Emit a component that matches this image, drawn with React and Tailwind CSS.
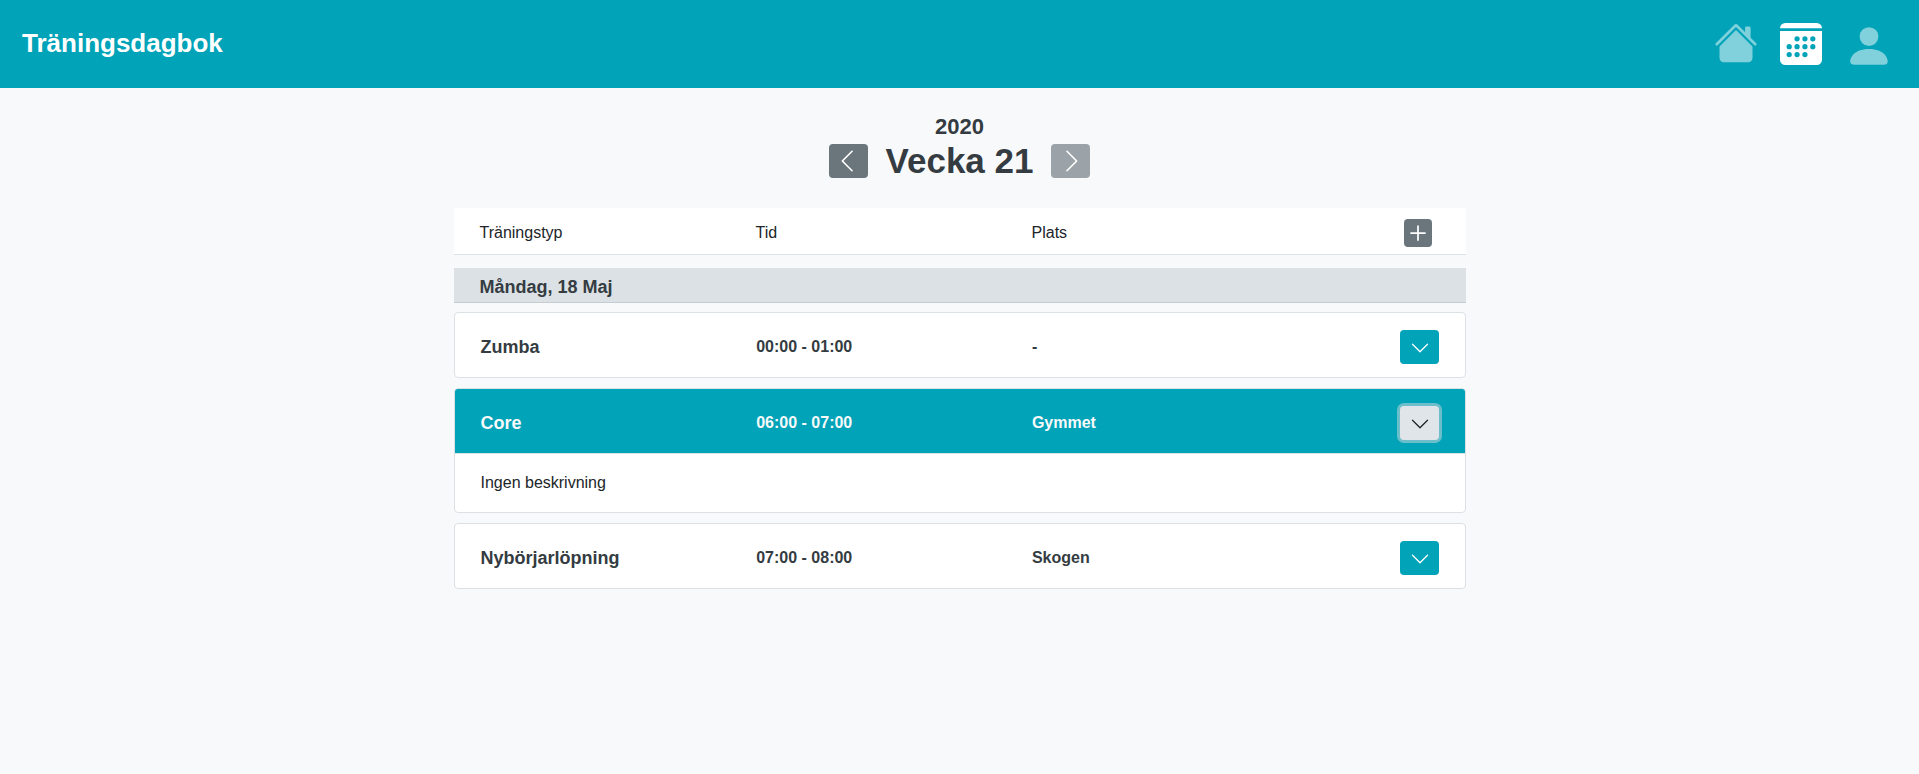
import { useState } from "react";

const initialWorkouts = [
  { id: "zumba", type: "Zumba", time: "00:00 - 01:00", place: "-" },
  { id: "core", type: "Core", time: "06:00 - 07:00", place: "Gymmet" },
  { id: "nyborjarlopning", type: "Nybörjarlöpning", time: "07:00 - 08:00", place: "Skogen" },
];

function HouseIcon() {
  return (
    <svg className="size-11" viewBox="0 0.4 16 16" fill="currentColor" aria-hidden="true">
      <path d="M8 3.293l6 6V13.5a1.5 1.5 0 01-1.5 1.5h-9A1.5 1.5 0 012 13.5V9.293l6-6zm5.3.793V6.3l-2-2V2.5a.5.5 0 01.5-.5h1a.5.5 0 01.5.5z" />
      <path d="M7.293 1.5a1 1 0 011.414 0l6.647 6.646a.5.5 0 01-.708.708L8 2.207 1.354 8.854a.5.5 0 11-.708-.708L7.293 1.5z" />
    </svg>
  );
}

function CalendarIcon() {
  return (
    <svg className="size-[42px]" viewBox="0 0 16 16" fill="currentColor" aria-hidden="true">
      <path d="M0 2a2 2 0 012-2h12a2 2 0 012 2H0z" />
      <path
        fillRule="evenodd"
        d="M0 3h16v11a2 2 0 01-2 2H2a2 2 0 01-2-2V3zm6.5 4a1 1 0 100-2 1 1 0 000 2zm3 0a1 1 0 100-2 1 1 0 000 2zm3 0a1 1 0 100-2 1 1 0 000 2zm-9 3a1 1 0 100-2 1 1 0 000 2zm3 0a1 1 0 100-2 1 1 0 000 2zm3 0a1 1 0 100-2 1 1 0 000 2zm3 0a1 1 0 100-2 1 1 0 000 2zm-9 3a1 1 0 100-2 1 1 0 000 2zm3 0a1 1 0 100-2 1 1 0 000 2zm3 0a1 1 0 100-2 1 1 0 000 2z"
      />
    </svg>
  );
}

function PersonIcon() {
  return (
    <svg className="size-[50px]" viewBox="0 -0.6 16 16" fill="currentColor" aria-hidden="true">
      <path d="M3 14s-1 0-1-1 1-4 6-4 6 3 6 4-1 1-1 1H3zm5-6a3 3 0 100-6 3 3 0 000 6z" />
    </svg>
  );
}

function ChevronLeft() {
  return (
    <svg className="size-[26px]" viewBox="0.5 0 16 16" fill="currentColor" aria-hidden="true">
      <path d="M11.354 1.646a.5.5 0 010 .708L5.707 8l5.647 5.646a.5.5 0 01-.708.708l-6-6a.5.5 0 010-.708l6-6a.5.5 0 01.708 0z" />
    </svg>
  );
}

function ChevronRight() {
  return (
    <svg className="size-[26px]" viewBox="-0.5 0 16 16" fill="currentColor" aria-hidden="true">
      <path d="M4.646 1.646a.5.5 0 01.708 0l6 6a.5.5 0 010 .708l-6 6a.5.5 0 01-.708-.708L10.293 8 4.646 2.354a.5.5 0 010-.708z" />
    </svg>
  );
}

function ChevronDown() {
  return (
    <svg className="size-5" viewBox="0 0 16 16" fill="currentColor" aria-hidden="true">
      <path d="M1.646 4.646a.5.5 0 01.708 0L8 10.293l5.646-5.647a.5.5 0 01.708.708l-6 6a.5.5 0 01-.708 0l-6-6a.5.5 0 010-.708z" />
    </svg>
  );
}

function PlusIcon() {
  return (
    <svg className="size-7" viewBox="0 0 16 16" fill="currentColor" aria-hidden="true">
      <path d="M8 3.5a.5.5 0 01.5.5v3.5H12a.5.5 0 010 1H8.5V12a.5.5 0 01-1 0V8.5H4a.5.5 0 010-1h3.5V4a.5.5 0 01.5-.5z" />
    </svg>
  );
}

function WorkoutCard({ workout, open, onToggle }) {
  return (
    <article className="overflow-hidden rounded border border-[#dce1e5] bg-white">
      <div
        className={
          "grid grid-cols-[23fr_23fr_23fr_11fr] items-center pt-[17px] pr-[25px] pb-[13px] pl-[26px] font-bold " +
          (open ? "bg-[#00a3b8] text-[#f8f9fa]" : "text-[#343c42]")
        }
      >
        <h3 className="text-[18px] leading-6">{workout.type}</h3>
        <p>{workout.time}</p>
        <p>{workout.place}</p>
        <button
          type="button"
          aria-label={"Visa beskrivning för " + workout.type}
          aria-expanded={open}
          onClick={onToggle}
          className={
            "flex h-[34px] w-[39px] items-center justify-center justify-self-end rounded pt-px outline-none " +
            (open
              ? "bg-[#e0e5e9] text-[#212529] ring-3 ring-[#d8d9db]/50"
              : "bg-[#00a3b8] text-white")
          }
        >
          <ChevronDown />
        </button>
      </div>
      {open && (
        <div className="border-t border-[#dce1e5] px-[26px] py-[17px] text-[#212529]">
          <p>Ingen beskrivning</p>
        </div>
      )}
    </article>
  );
}

export default function App() {
  const [openId, setOpenId] = useState("core");

  return (
    <div className="min-h-screen bg-[#f8f9fb] font-['Liberation_Sans',Arial,sans-serif] text-base leading-6 text-[#212529]">
      <header className="flex h-[88px] items-center justify-between bg-[#00a3b8] pr-[25px] pl-[22px] text-white">
        <h1 className="pb-0.5 text-[26px] leading-8 font-bold">
          <a href="#">Träningsdagbok</a>
        </h1>
        <nav className="flex items-center gap-[22px]">
          <a href="#hem" aria-label="Hem" className="opacity-50">
            <HouseIcon />
          </a>
          <a href="#kalender" aria-label="Kalender">
            <CalendarIcon />
          </a>
          <a href="#profil" aria-label="Profil" className="opacity-50">
            <PersonIcon />
          </a>
        </nav>
      </header>

      <main className="mx-auto w-full max-w-[1012px] pt-[25px] pb-12">
        <div className="text-center font-bold text-[#343c42]">
          <p className="text-[22px] leading-[27px]">2020</p>
          <div className="flex items-center justify-center gap-[18px]">
            <button
              type="button"
              aria-label="Föregående vecka"
              className="flex h-[34px] w-[39px] items-center justify-center rounded bg-[#6a767c] text-white"
            >
              <ChevronLeft />
            </button>
            <h2 className="text-[35px] leading-[42px]">Vecka 21</h2>
            <button
              type="button"
              disabled
              aria-label="Nästa vecka"
              className="flex h-[34px] w-[39px] items-center justify-center rounded bg-[#6a767c] text-white opacity-65"
            >
              <ChevronRight />
            </button>
          </div>
        </div>

        <div className="mt-[26px] grid grid-cols-[23fr_23fr_23fr_11fr] items-center border-b border-[#dce1e5] bg-white px-[26px] pt-[11px] pb-[7px]">
          <span>Träningstyp</span>
          <span>Tid</span>
          <span>Plats</span>
          <button
            type="button"
            aria-label="Lägg till träning"
            className="mr-2 flex size-7 items-center justify-center justify-self-end rounded bg-[#6a767c] text-white"
          >
            <PlusIcon />
          </button>
        </div>

        <h2 className="mt-[13px] border-b border-[#c4ccd2] bg-[#dce1e5] px-[26px] pt-[7px] pb-[3px] text-[18px] leading-6 font-bold text-[#343c42]">
          Måndag, 18 Maj
        </h2>

        <section className="mt-[9px] flex flex-col gap-[10px]">
          {initialWorkouts.map((workout) => (
            <WorkoutCard
              key={workout.id}
              workout={workout}
              open={openId === workout.id}
              onToggle={() => setOpenId(openId === workout.id ? null : workout.id)}
            />
          ))}
        </section>
      </main>
    </div>
  );
}
